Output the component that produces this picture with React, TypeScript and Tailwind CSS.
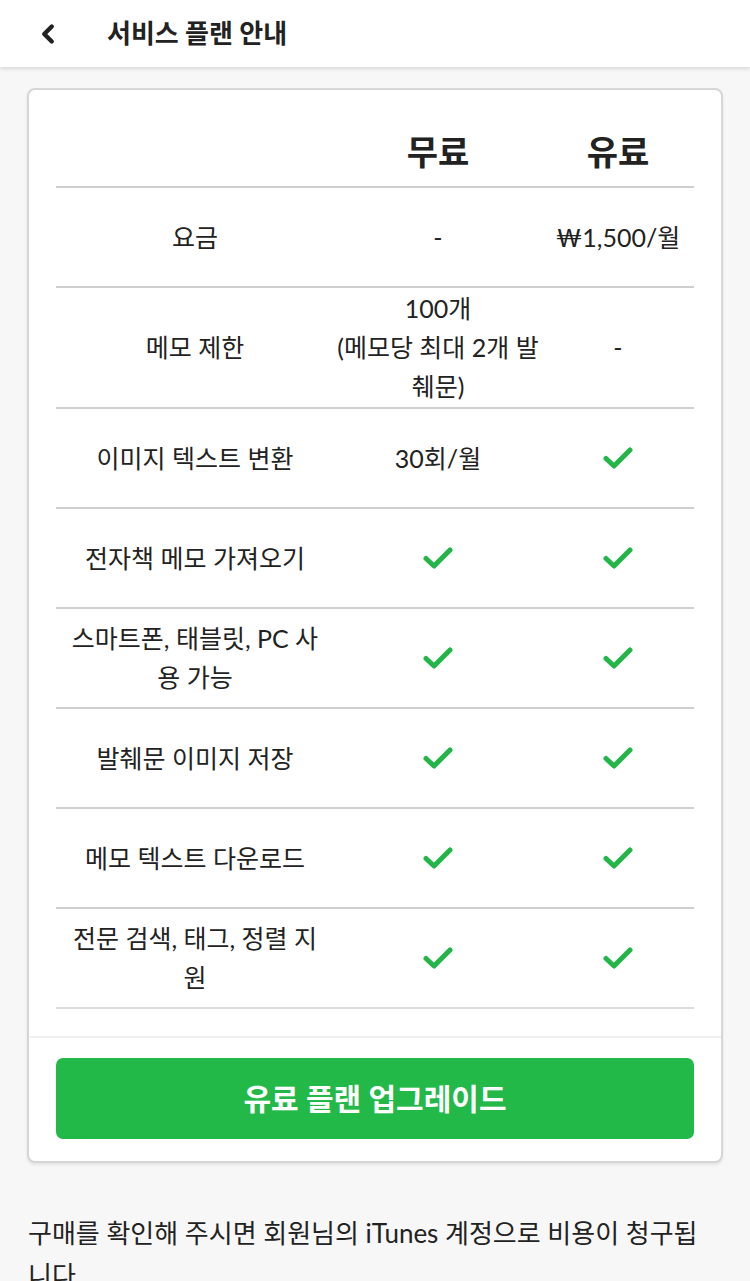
import { ChevronLeft } from 'lucide-react';

type Cell = string | true;

interface PlanRow {
  label: string;
  free: Cell;
  paid: Cell;
  tall?: boolean;
}

const rows: PlanRow[] = [
  { label: '요금', free: '-', paid: '₩1,500/월' },
  { label: '메모 제한', free: '100개\n(메모당 최대 2개 발\n췌문)', paid: '-', tall: true },
  { label: '이미지 텍스트 변환', free: '30회/월', paid: true },
  { label: '전자책 메모 가져오기', free: true, paid: true },
  { label: '스마트폰, 태블릿, PC 사\n용 가능', free: true, paid: true },
  { label: '발췌문 이미지 저장', free: true, paid: true },
  { label: '메모 텍스트 다운로드', free: true, paid: true },
  { label: '전문 검색, 태그, 정렬 지\n원', free: true, paid: true },
];

function Check() {
  return (
    <svg width="30" height="24" viewBox="0 0 30 24" fill="none">
      <path
        d="M3 12.5 L11 20 L27 4"
        stroke="#22b548"
        strokeWidth="5"
        strokeLinecap="round"
        strokeLinejoin="round"
      />
    </svg>
  );
}

function CellView({ value }: { value: Cell }) {
  if (value === true) return <Check />;
  return <span className="whitespace-pre-line">{value}</span>;
}

export default function App() {
  return (
    <div
      className="min-h-[1281px] bg-[#f7f7f7] text-[#222]"
      style={{ fontFamily: 'Lato, "Noto Sans CJK KR", sans-serif' }}
    >
      {/* Header */}
      <div className="h-[67px] bg-white flex items-center shadow-[0_2px_4px_rgba(0,0,0,0.12)] relative">
        <ChevronLeft className="ml-[33px] w-[30px] h-[30px] text-[#222]" strokeWidth={3.5} />
        <h1 className="ml-[44px] text-[26px] font-bold">서비스 플랜 안내</h1>
      </div>

      {/* Card */}
      <div className="mx-[27px] mt-[21px] bg-white border-2 border-[#d6d6d6] rounded-[8px] shadow-[0_2px_3px_rgba(0,0,0,0.08)]">
        <div className="px-[27px]">
          <div className="grid grid-cols-[278px_208px_152px] h-[96px] items-center text-[34px] font-bold text-center pt-[26px]">
            <div />
            <div>무료</div>
            <div>유료</div>
          </div>
          {rows.map((row) => (
            <div
              key={row.label}
              className={`grid grid-cols-[278px_208px_152px] border-t-2 border-[#cfcfcf] items-center text-center text-[25px] leading-[39px] ${
                row.tall ? 'h-[121px]' : 'h-[100px]'
              }`}
            >
              <div className="whitespace-pre-line px-1">{row.label}</div>
              <div className="flex justify-center">
                <CellView value={row.free} />
              </div>
              <div className="flex justify-center">
                <CellView value={row.paid} />
              </div>
            </div>
          ))}
          <div className="border-t-2 border-[#dcdcdc] h-[29px]" />
        </div>
        <div className="border-t-2 border-[#f0f0f0] px-[27px] pt-[20px] pb-[22px]">
          <button className="w-full h-[81px] rounded-[7px] bg-[#22b948] text-white text-[30px] font-bold">
            유료 플랜 업그레이드
          </button>
        </div>
      </div>

      <p className="pl-[28px] pr-[34px] pt-[49px] text-[26px] leading-[42px]">
        구매를 확인해 주시면 회원님의 iTunes 계정으로 비용이 청구됩니다.
      </p>
    </div>
  );
}
